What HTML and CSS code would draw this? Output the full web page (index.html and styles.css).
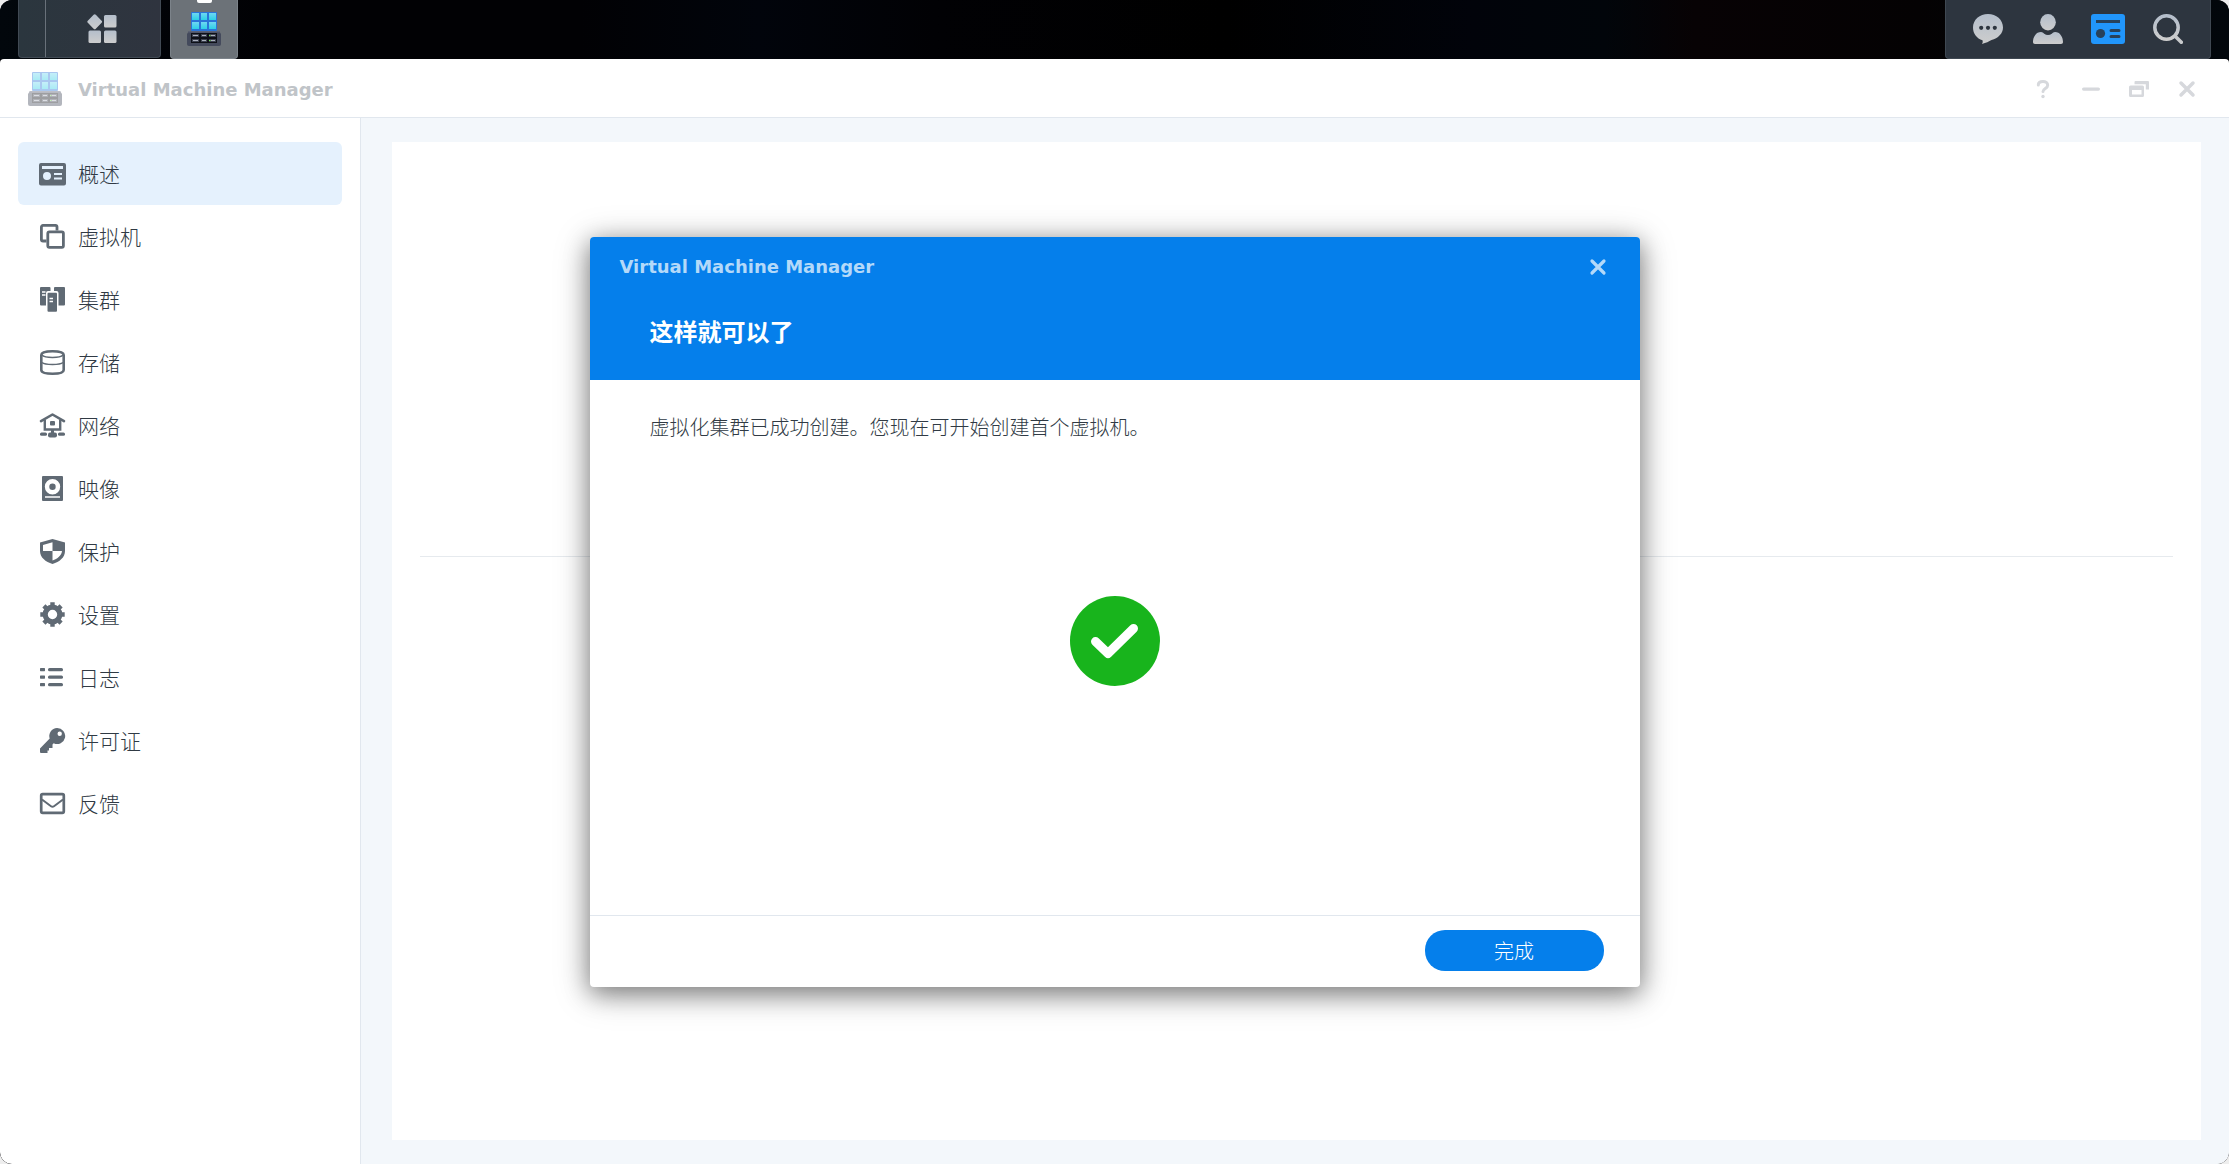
FILE: index.html
```html
<!DOCTYPE html>
<html lang="zh-CN">
<head>
  <meta charset="UTF-8" />
  <meta name="viewport" content="width=device-width, initial-scale=1.0"/>
  <title>Virtual Machine Manager</title>
  <link rel="stylesheet" href="styles.css">
</head>
<body>
  <svg class="defs" aria-hidden="true">
    <defs>
      <linearGradient id="cube" x1="0" y1="0" x2="0" y2="1">
        <stop offset="0" stop-color="#6fd6f2"/>
        <stop offset="1" stop-color="#2bd0e6"/>
      </linearGradient>
      <linearGradient id="silver" x1="0" y1="0" x2="0" y2="1">
        <stop offset="0" stop-color="#b4becb"/>
        <stop offset="1" stop-color="#cdcdcd"/>
      </linearGradient>
      <symbol id="vmm" viewBox="0 0 34 34">
        <rect x="4" y="0" width="26" height="19" rx="1" fill="#2a74d8"/>
        <g fill="url(#cube)">
          <rect x="5" y="1" width="7" height="7"/><rect x="14" y="1" width="6" height="7"/><rect x="22" y="1" width="7" height="7"/>
          <rect x="5" y="10" width="7" height="7"/><rect x="14" y="10" width="6" height="7"/><rect x="22" y="10" width="7" height="7"/>
        </g>
        <path d="M2 19h30l2 3v10a2 2 0 0 1-2 2H2a2 2 0 0 1-2-2V22z" fill="#444a5c"/>
        <path d="M2 19h30l1 1.500H1z" fill="#5b6175"/>
        <rect x="4" y="21" width="26" height="10" fill="#0d1017"/>
        <g fill="#3c4150">
          <rect x="5" y="22" width="7" height="3"/><rect x="14" y="22" width="6" height="3"/><rect x="22" y="22" width="7" height="3"/>
          <rect x="5" y="27" width="7" height="3"/><rect x="14" y="27" width="6" height="3"/><rect x="22" y="27" width="7" height="3"/>
        </g>
        <path d="M6 23.500h5M15 23.500h4M24 23.500h4M6 28.500h5M15 28.500h4M24 28.500h4" stroke="#a9afbb"/>
        <path d="M22 23.500h1.500M22 28.500h1.500" stroke="#6fe04a"/>
      </symbol>
    </defs>
  </svg>

  <header class="taskbar">
    <div class="launcher">
      <button class="show-desktop" aria-label="显示桌面"></button>
      <button class="main-menu" aria-label="主菜单">
        <svg width="30" height="30" viewBox="0 0 30 30" fill="url(#silver)">
          <path d="M6.600 .8a1.500 1.500 0 0 1 2.200 0l5.800 5.900a1.500 1.500 0 0 1 0 2.100l-5.800 5.900a1.500 1.500 0 0 1-2.200 0L.8 8.800a1.500 1.500 0 0 1 0-2.100z"/>
          <rect x="17" y="1" width="12.500" height="12.500" rx="1.500"/>
          <rect x="1.500" y="16.500" width="12.500" height="12.500" rx="1.500"/>
          <rect x="17" y="16.500" width="12.500" height="12.500" rx="1.500"/>
        </svg>
      </button>
    </div>
    <button class="app-tile" aria-label="Virtual Machine Manager">
      <svg width="34" height="34"><use href="#vmm"/></svg>
    </button>
    <div class="tray">
      <button aria-label="通知">
        <svg width="30" height="30" viewBox="0 0 30 30">
          <path d="M15 0c8.300 0 15 5.800 15 13.500 0 6-5 10.800-11.500 12.600-2.500 1.400-5.500 3-9.500 3.800.8-1 .9-2.200.5-3.600C3.800 24.500 0 19.800 0 13.500 0 5.800 6.700 0 15 0z" fill="url(#silver)"/>
          <g fill="#2d353f"><circle cx="8.200" cy="13.800" r="2.100"/><circle cx="15" cy="13.800" r="2.100"/><circle cx="21.800" cy="13.800" r="2.100"/></g>
        </svg>
      </button>
      <button aria-label="用户">
        <svg width="30" height="30" viewBox="0 0 30 30" fill="url(#silver)">
          <ellipse cx="15" cy="8.200" rx="7.800" ry="8.200"/>
          <path d="M8 18c1.500 0 2 .8 3.200 1.700 2.200 1.700 5.400 1.700 7.600 0C20 18.800 20.500 18 22 18c5 0 8 5 8 10 0 1.300-.7 2-2 2H2c-1.300 0-2-.7-2-2 0-5 3-10 8-10z"/>
        </svg>
      </button>
      <button aria-label="小组件">
        <svg width="34" height="30" viewBox="0 0 34 30">
          <rect width="34" height="30" rx="3" fill="#2196fb"/>
          <path d="M5 6h24v3H5z" fill="#28415a"/>
          <path d="M20 16.500h8M20 22.500h8" stroke="#28415a" stroke-width="3" stroke-linecap="round"/>
          <circle cx="9.500" cy="19.500" r="4.600" fill="#28415a"/>
        </svg>
      </button>
      <button aria-label="搜索">
        <svg width="30" height="30" viewBox="0 0 30 30" fill="none" stroke="url(#silver)" stroke-width="3.500">
          <circle cx="13.500" cy="13.500" r="11.700"/>
          <path d="M22 22l6.300 6.300" stroke="#c8cacc" stroke-width="3.600" stroke-linecap="round"/>
        </svg>
      </button>
    </div>
  </header>

  <div class="window">
    <div class="titlebar">
      <svg class="app-icon" width="34" height="34"><use href="#vmm"/></svg>
      <h1>Virtual Machine Manager</h1>
      <div class="window-tools">
        <button aria-label="帮助">
          <svg width="20" height="20" viewBox="0 0 20 20" fill="none" stroke="currentColor" stroke-width="3" stroke-linecap="round">
            <path d="M5.300 6C5.300 3.500 7.400 2.400 10 2.400s4.700 1.500 4.700 3.800c0 3.200-4.700 3.200-4.700 6.300"/>
            <path d="M10 17.400v.1" stroke-width="3.400"/>
          </svg>
        </button>
        <button aria-label="最小化">
          <svg width="20" height="20" viewBox="0 0 20 20"><rect x="1" y="8.500" width="18" height="3.200" rx="1.600" fill="currentColor"/></svg>
        </button>
        <button aria-label="还原">
          <svg width="20" height="20" viewBox="0 0 20 20" fill="currentColor">
            <path d="M6.500 2H19a1 1 0 0 1 1 1v7.500h-3.200V5.200H5.500V3a1 1 0 0 1 1-1z"/>
            <path fill-rule="evenodd" d="M1.500 6.500h12A1.500 1.500 0 0 1 15 8v8.500a1.500 1.500 0 0 1-1.500 1.500h-12A1.500 1.500 0 0 1 0 16.500V8a1.500 1.500 0 0 1 1.500-1.500zM3 11v4.500h9.500V11z"/>
          </svg>
        </button>
        <button aria-label="关闭">
          <svg width="20" height="20" viewBox="0 0 20 20" stroke="currentColor" stroke-width="3.500" stroke-linecap="round"><path d="M4 4l12 12M16 4L4 16"/></svg>
        </button>
      </div>
    </div>

    <div class="window-body">
      <nav class="sidebar">
        <a class="nav-item active" href="#overview">
          <svg viewBox="0 0 27 27"><path fill="currentColor" fill-rule="evenodd" d="M2 3h23a2 2 0 0 1 2 2v18.500a2 2 0 0 1-2 2H2a2 2 0 0 1-2-2V5a2 2 0 0 1 2-2zm1 3v3h21V6zM8 12a4 4 0 1 0 0 8 4 4 0 0 0 0-8zm7 1v2h8v-2zm0 4.500v2h8v-2z"/></svg>
          <span>概述</span>
        </a>
        <a class="nav-item" href="#vm">
          <svg viewBox="0 0 27 27" fill="none" stroke="currentColor" stroke-width="2.800"><path d="M7.500 18H4a1.600 1.600 0 0 1-1.600-1.600V4A1.600 1.600 0 0 1 4 2.400h12.400A1.600 1.600 0 0 1 18 4v3.500"/><rect x="8.800" y="8.800" width="15.600" height="15.600" rx="1.600"/></svg>
          <span>虚拟机</span>
        </a>
        <a class="nav-item" href="#cluster">
          <svg viewBox="0 0 27 27"><path fill="currentColor" d="M2 1h8.500a1 1 0 0 1 1 1v3H9a2 2 0 0 0-2 2v12.500H2a1 1 0 0 1-1-1V2a1 1 0 0 1 1-1zM16 1h9a1 1 0 0 1 1 1v16.500a1 1 0 0 1-1 1h-5.500V7a2 2 0 0 0-2-2H15V2a1 1 0 0 1 1-1z"/><rect x="8.500" y="6.800" width="9.500" height="19" rx="1" fill="currentColor"/><path d="M3 6h3.500M3 9h3.500M10.500 12.500h3.500M10.500 15.500h3.500" stroke="#fff" stroke-width="1.300"/></svg>
          <span>集群</span>
        </a>
        <a class="nav-item" href="#storage">
          <svg viewBox="0 0 27 27" fill="none" stroke="currentColor"><path d="M2.300 6c0-2.500 4.500-3.800 11.200-3.800S24.700 3.500 24.700 6v15c0 2.500-4.500 3.800-11.200 3.800S2.300 23.500 2.300 21z" stroke-width="2.600"/><path d="M3 6c1.500 1.700 5.500 2.500 10.500 2.500S22.500 7.700 24 6M3 13.500c1.500 1.300 5.500 2 10.500 2s9-.7 10.500-2" stroke-width="1.500"/></svg>
          <span>存储</span>
        </a>
        <a class="nav-item" href="#network">
          <svg viewBox="0 0 27 27" fill="none" stroke="currentColor"><path d="M2 9.200L13.500 2.500 25 9.200" stroke-width="2.600" stroke-linecap="round" stroke-linejoin="round"/><path d="M5.800 8v9.500h15.400V8" stroke-width="2.400"/><g fill="currentColor" stroke="none"><rect x="11" y="9" width="5" height="4.500" rx="1"/><rect x="12" y="17" width="3" height="5"/><rect x="1" y="20.500" width="7" height="3.200" rx="1.500"/><rect x="19" y="20.500" width="7" height="3.200" rx="1.500"/><rect x="9" y="20.500" width="9" height="5" rx="2"/></g></svg>
          <span>网络</span>
        </a>
        <a class="nav-item" href="#image">
          <svg viewBox="0 0 27 27"><path fill="currentColor" fill-rule="evenodd" d="M4 1h19a1 1 0 0 1 1 1v23a1 1 0 0 1-1 1H4a1 1 0 0 1-1-1V2a1 1 0 0 1 1-1zm9.500 3a7.700 7.700 0 1 0 0 15.400 7.700 7.700 0 0 0 0-15.400zM6 21.200v1.600h15v-1.600z"/><circle cx="13.500" cy="11.700" r="3.200" fill="currentColor"/></svg>
          <span>映像</span>
        </a>
        <a class="nav-item" href="#protection">
          <svg viewBox="0 0 27 27"><path fill="currentColor" fill-rule="evenodd" d="M13.500 1L26 4.500V13c0 6.500-5.500 10.800-12.500 13C6.500 23.800 1 19.500 1 13V4.500zm0 3.300L4 7v6h9.500zm0 8.700v9.500c5-1.800 9-5 9.500-9.500z"/></svg>
          <span>保护</span>
        </a>
        <a class="nav-item" href="#settings">
          <svg viewBox="0 0 27 27" fill="none" stroke="currentColor"><circle cx="13.500" cy="13.500" r="7.300" stroke-width="5.200"/><path d="M13.500 1.300v4M13.500 21.700v4M1.300 13.500h4M21.700 13.500h4M4.900 4.900l3 3M19.100 19.100l3 3M4.900 22.100l3-3M19.100 7.900l3-3" stroke-width="4.400"/></svg>
          <span>设置</span>
        </a>
        <a class="nav-item" href="#log">
          <svg viewBox="0 0 27 27" fill="currentColor"><rect x="1" y="4" width="5" height="3.200" rx=".6"/><rect x="1" y="11.500" width="5" height="3.200" rx=".6"/><rect x="1" y="19" width="5" height="3.200" rx=".6"/><rect x="9" y="4" width="15" height="3.200" rx="1.500"/><rect x="9" y="11.500" width="15" height="3.200" rx="1.500"/><rect x="9" y="19" width="15" height="3.200" rx="1.500"/></svg>
          <span>日志</span>
        </a>
        <a class="nav-item" href="#license">
          <svg viewBox="0 0 27 27"><path fill="currentColor" fill-rule="evenodd" d="M18 1a8 8 0 1 1-3.300 15.200L13.500 17.400V21H10v2.500H8.500V26H2a1 1 0 0 1-1-1v-3.600l9.700-9.800A8 8 0 0 1 18 1zm2.700 3.500a2.200 2.200 0 1 0 0 4.400 2.200 2.200 0 0 0 0-4.400z"/></svg>
          <span>许可证</span>
        </a>
        <a class="nav-item" href="#feedback">
          <svg viewBox="0 0 27 27" fill="none" stroke="currentColor"><rect x="2.200" y="4.200" width="22.600" height="18.600" rx="1.500" stroke-width="2.700"/><path d="M3 9.500l9 6.700a2.500 2.500 0 0 0 3 0l9-6.700" stroke-width="2"/></svg>
          <span>反馈</span>
        </a>
      </nav>

      <main class="content">
        <div class="panel">
          <section class="panel-top"></section>
          <hr>
        </div>
      </main>
    </div>

    <div class="overlay">
      <div class="modal" role="dialog" aria-labelledby="wizard-title">
        <div class="modal-header">
          <div class="modal-bar">
            <span class="modal-app">Virtual Machine Manager</span>
            <button class="modal-close" aria-label="关闭">
              <svg width="20" height="20" viewBox="0 0 20 20" stroke="currentColor" stroke-width="3.200" stroke-linecap="round"><path d="M4 4l12 12M16 4L4 16"/></svg>
            </button>
          </div>
          <h2 id="wizard-title">这样就可以了</h2>
        </div>
        <div class="modal-body">
          <p>虚拟化集群已成功创建。您现在可开始创建首个虚拟机。</p>
          <svg class="success" width="90" height="90" viewBox="0 0 90 90">
            <circle cx="45" cy="45" r="45" fill="#18b41c"/>
            <path d="M25.500 45.500L38 57.500 63.500 32.500" fill="none" stroke="#fff" stroke-width="9" stroke-linecap="round" stroke-linejoin="round"/>
          </svg>
        </div>
        <div class="modal-footer">
          <button class="primary">完成</button>
        </div>
      </div>
    </div>
  </div>
</body>
</html>
```
FILE: styles.css
```css
:root {
  --blue: #057feb;
  --text: #303a44;
  --icon: #606a74;
  --line: #e1e7ee;
  --page: #f3f7fb;
  --bar: #2d353f;
}

* {
  margin: 0;
  padding: 0;
  box-sizing: border-box;
}

html {
  background: #eee;
}

body {
  display: flex;
  flex-direction: column;
  min-height: 100vh;
  border-radius: 12px;
  overflow: hidden;
  background: #010206;
  color: var(--text);
  font-family: Verdana, "DejaVu Sans", "Noto Sans CJK SC", sans-serif;
  font-size: 20px;
}

button {
  border: none;
  background: none;
  color: inherit;
  font: inherit;
  cursor: pointer;
}

svg {
  display: block;
  flex: none;
}

.defs {
  position: absolute;
  width: 0;
  height: 0;
}

/* Taskbar */
.taskbar {
  display: flex;
  height: 59px;
  padding: 0 18px;
  background: linear-gradient(90deg, #02070c 0, #010104 12%, #010104 26%, #01040b 34%, #010104 42%, #000 55%, #01030a 66%, #01050a 72%, #070204 76%, #040203 86%, #02070c 100%);
}

.launcher {
  display: flex;
  height: 58px;
  margin-right: 9px;
  border: 1px solid #414a54;
  border-top: none;
  border-radius: 0 0 4px 4px;
  background: linear-gradient(90deg, #2b363e, #2f343f);
}

.show-desktop {
  width: 27px;
  border-right: 1px solid #69717a;
}

.main-menu {
  display: flex;
  justify-content: center;
  align-items: center;
  width: 114px;
  padding-right: 2px;
}

.app-tile {
  display: flex;
  position: relative;
  justify-content: center;
  align-items: center;
  width: 68px;
  border: 1px solid #7c838a;
  border-top: none;
  border-radius: 0 0 4px 4px;
  background: #6c7278;
}

.app-tile::before {
  content: "";
  position: absolute;
  top: 0;
  left: 50%;
  width: 15px;
  height: 3px;
  margin-left: -7px;
  border-radius: 0 0 2px 2px;
  background: #fff;
}

.tray {
  display: flex;
  margin-left: auto;
  padding: 0 12px;
  border: 1px solid #3f4852;
  border-top: none;
  border-radius: 0 0 4px 4px;
  background: var(--bar);
}

.tray button {
  display: flex;
  justify-content: center;
  align-items: center;
  width: 60px;
}

/* App window */
.window {
  display: flex;
  flex-direction: column;
  flex: 1;
  position: relative;
  border-radius: 4px 4px 12px 12px;
  overflow: hidden;
  background: #fff;
}

.titlebar {
  display: flex;
  align-items: center;
  height: 59px;
  padding: 2px 18px 0 28px;
  border-bottom: 1px solid var(--line);
}

.app-icon {
  margin-right: 16px;
  opacity: 0.4;
}

.titlebar h1,
.modal-app {
  font-size: 18px;
  font-weight: bold;
}

.titlebar h1 {
  color: #c0c4c8;
}

.window-tools {
  display: flex;
  margin-left: auto;
  color: #d6d8dc;
}

.window-tools button {
  display: flex;
  justify-content: center;
  align-items: center;
  width: 48px;
  height: 48px;
}

.window-body {
  display: flex;
  flex: 1;
}

.sidebar {
  flex: none;
  width: 361px;
  padding: 24px 18px;
  border-right: 1px solid var(--line);
}

.nav-item {
  display: flex;
  align-items: center;
  gap: 12px;
  height: 63px;
  padding: 0 21px;
  border-radius: 6px;
  color: var(--text);
  font-size: 21px;
  font-weight: 300;
  text-decoration: none;
}

.nav-item span {
  padding-bottom: 2px;
}

.nav-item svg {
  width: 27px;
  height: 27px;
  color: var(--icon);
}

.nav-item.active {
  background: #e5f1fd;
}

.content {
  display: flex;
  flex: 1;
  padding: 24px 28px 24px 31px;
  background: var(--page);
}

.panel {
  flex: 1;
  padding: 0 28px;
  background: #fff;
}

.panel-top {
  height: 414px;
}

.panel hr {
  border: none;
  border-top: 1px solid #e6eaee;
}

/* Wizard dialog */
.overlay {
  display: flex;
  position: absolute;
  inset: 0;
  justify-content: center;
  align-items: center;
}

.modal {
  display: flex;
  flex-direction: column;
  width: 1050px;
  max-width: 90%;
  min-height: 750px;
  border-radius: 4px;
  background: #fff;
  box-shadow: 0 6px 36px rgba(0, 0, 0, 0.25), 0 6px 24px rgba(0, 0, 0, 0.4);
}

.modal-header {
  height: 143px;
  border-radius: 4px 4px 0 0;
  background: var(--blue);
  color: #fff;
}

.modal-bar {
  display: flex;
  justify-content: space-between;
  align-items: center;
  height: 60px;
  padding: 0 18px 0 30px;
  color: #b4d9f9;
}

.modal-close {
  display: flex;
  justify-content: center;
  align-items: center;
  width: 48px;
  height: 48px;
}

.modal-header h2 {
  padding: 0 60px;
  font-size: 24px;
  line-height: 72px;
}

.modal-body {
  flex: 1;
  padding: 32px 60px;
}

.modal-body p {
  font-size: 20px;
  font-weight: 300;
  line-height: 32px;
}

.success {
  margin: 152px auto 0;
}

.modal-footer {
  display: flex;
  justify-content: flex-end;
  padding: 14px 36px 16px;
  border-top: 1px solid var(--line);
}

.primary {
  width: 179px;
  height: 41px;
  border-radius: 20px;
  background: var(--blue);
  color: #fff;
  font-weight: 300;
}
```
